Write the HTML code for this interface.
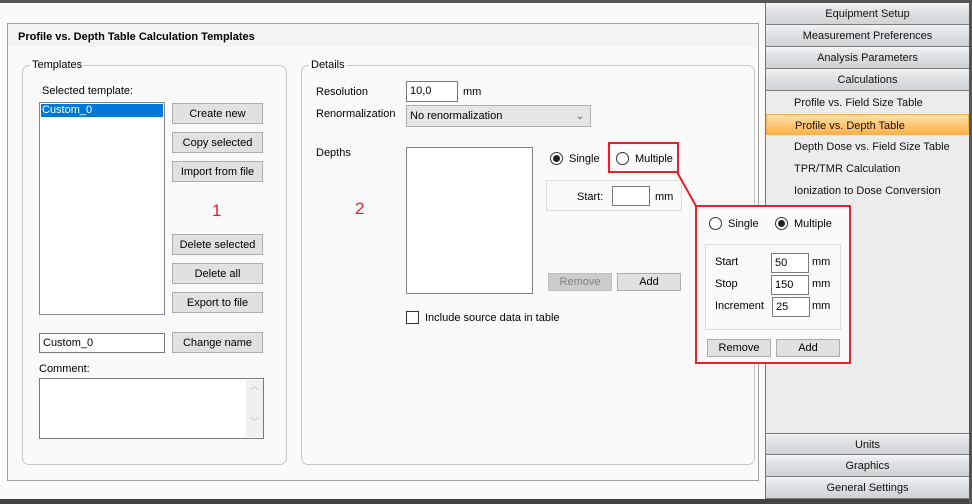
<!DOCTYPE html>
<html><head><meta charset="utf-8"><style>
*{margin:0;padding:0;box-sizing:border-box}
body{width:972px;height:504px;overflow:hidden;background:#fafafa;font-family:"Liberation Sans",sans-serif;font-size:11px;color:#000;position:relative}
.a{position:absolute}
.btn{position:absolute;background:#e1e1e1;border:1px solid #adadad;text-align:center;line-height:20px;font-size:11px}
.inp{position:absolute;background:#fff;border:1px solid #7a7a7a;padding-left:3px;line-height:19px}
.grp{position:absolute;border:1px solid #c8c8c8;border-radius:7px}
.leg{position:absolute;background:#fafafa;padding:0 2px;line-height:14px}
.rad{position:absolute;width:13px;height:13px;border:1px solid #333;border-radius:50%;background:#fff}
.rad.on::after{content:"";position:absolute;left:2px;top:2px;width:7px;height:7px;border-radius:50%;background:#222}
.hdr{position:absolute;left:766px;width:203px;height:22px;border-bottom:1px solid #7c7c7c;background:linear-gradient(#f2f3f4 0%,#e3e5e7 30%,#cfd3d6 100%);text-align:center;line-height:22px;color:#111}
.it{position:absolute;left:794px;line-height:14px;color:#111}
.red{position:absolute;border:2px solid #e8202a}
</style></head><body>
<div class="a" style="left:0;top:0;width:972px;height:3px;background:#555"></div>
<div class="a" style="left:0;top:499px;width:972px;height:5px;background:#444"></div>
<div class="a" style="left:969px;top:0;width:3px;height:504px;background:#555"></div>

<div class="a" style="left:765px;top:3px;width:204px;height:496px;background:#ececec;border-left:1px solid #777"></div>
<div class="hdr" style="top:3px">Equipment Setup</div>
<div class="hdr" style="top:25px">Measurement Preferences</div>
<div class="hdr" style="top:47px">Analysis Parameters</div>
<div class="hdr" style="top:69px">Calculations</div>
<div class="it" style="top:96px">Profile vs. Field Size Table</div>
<div class="a" style="left:766px;top:114px;width:203px;height:21px;background:linear-gradient(#ffe0a8,#fdb14a);border:1px solid #f5b050"></div>
<div class="it" style="top:119px;left:795px">Profile vs. Depth Table</div>
<div class="it" style="top:140px">Depth Dose vs. Field Size Table</div>
<div class="it" style="top:162px">TPR/TMR Calculation</div>
<div class="it" style="top:184px">Ionization to Dose Conversion</div>
<div class="hdr" style="top:433px;border-top:1px solid #7c7c7c">Units</div>
<div class="hdr" style="top:455px">Graphics</div>
<div class="hdr" style="top:477px">General Settings</div>

<div class="a" style="left:7px;top:23px;width:752px;height:458px;border:1px solid #a0a0a0;background:#fafafa"></div>
<div class="a" style="left:8px;top:24px;width:750px;height:23px;background:#f3f3f3"></div>
<div class="a" style="left:18px;top:30px;font-weight:bold;font-size:11px;line-height:14px">Profile vs. Depth Table Calculation Templates</div>

<div class="grp" style="left:22px;top:65px;width:265px;height:400px"></div>
<div class="leg" style="left:30px;top:58px">Templates</div>
<div class="a" style="left:42px;top:85px">Selected template:</div>
<div class="a" style="left:39px;top:102px;width:126px;height:213px;background:#fff;border:1px solid #828790"></div>
<div class="a" style="left:41px;top:104px;width:122px;height:13px;background:#0078d7;color:#fff;line-height:13px;padding-left:1px">Custom_0</div>
<div class="btn" style="left:172px;top:103px;width:91px;height:21px">Create new</div>
<div class="btn" style="left:172px;top:132px;width:91px;height:21px">Copy selected</div>
<div class="btn" style="left:172px;top:161px;width:91px;height:21px">Import from file</div>
<div class="a" style="left:212px;top:201px;color:#e8202a;font-size:17px">1</div>
<div class="btn" style="left:172px;top:234px;width:91px;height:21px">Delete selected</div>
<div class="btn" style="left:172px;top:263px;width:91px;height:21px">Delete all</div>
<div class="btn" style="left:172px;top:292px;width:91px;height:21px">Export to file</div>
<div class="inp" style="left:39px;top:333px;width:126px;height:20px;line-height:18px">Custom_0</div>
<div class="btn" style="left:172px;top:332px;width:91px;height:21px">Change name</div>
<div class="a" style="left:39px;top:363px">Comment:</div>
<div class="a" style="left:39px;top:378px;width:225px;height:61px;background:#fff;border:1px solid #7a7a7a"></div>
<div class="a" style="left:246px;top:380px;width:17px;height:57px;background:#f0f0f0;color:#bbb;font-size:9px;text-align:center;line-height:12px">︿<br><br><br>﹀</div>

<div class="grp" style="left:301px;top:65px;width:454px;height:400px"></div>
<div class="leg" style="left:309px;top:58px">Details</div>
<div class="a" style="left:316px;top:86px">Resolution</div>
<div class="inp" style="left:406px;top:81px;width:52px;height:21px;line-height:19px">10,0</div>
<div class="a" style="left:463px;top:86px">mm</div>
<div class="a" style="left:316px;top:108px">Renormalization</div>
<div class="a" style="left:406px;top:105px;width:185px;height:22px;background:#e5e5e5;border:1px solid #adadad;padding-left:3px;line-height:21px">No renormalization<span style="position:absolute;right:6px;top:0;color:#555;font-size:10px">&#8964;</span></div>
<div class="a" style="left:316px;top:147px">Depths</div>
<div class="a" style="left:355px;top:199px;color:#e8202a;font-size:17px">2</div>
<div class="a" style="left:406px;top:147px;width:127px;height:147px;background:#fff;border:1px solid #828282"></div>
<div class="rad on" style="left:550px;top:152px"></div>
<div class="a" style="left:569px;top:153px">Single</div>
<div class="rad" style="left:616px;top:152px"></div>
<div class="a" style="left:635px;top:153px">Multiple</div>
<div class="a" style="left:546px;top:180px;width:136px;height:31px;border:1px solid #dcdcdc;background:#fafafa"></div>
<div class="a" style="left:577px;top:191px">Start:</div>
<div class="inp" style="left:612px;top:186px;width:38px;height:20px"></div>
<div class="a" style="left:655px;top:191px">mm</div>
<div class="btn" style="left:548px;top:273px;width:64px;height:18px;line-height:17px;background:#cccccc;border-color:#bfbfbf;color:#838383">Remove</div>
<div class="btn" style="left:617px;top:273px;width:64px;height:18px;line-height:17px">Add</div>
<div class="a" style="left:406px;top:311px;width:13px;height:13px;border:1px solid #333;background:#fff"></div>
<div class="a" style="left:425px;top:312px">Include source data in table</div>

<div class="red" style="left:608px;top:142px;width:71px;height:31px"></div>
<svg class="a" style="left:0;top:0" width="972" height="504"><line x1="677" y1="172" x2="696" y2="206" stroke="#e8202a" stroke-width="2"/></svg>
<div class="red" style="left:695px;top:205px;width:156px;height:159px;background:#fafafa"></div>
<div class="rad" style="left:709px;top:217px"></div>
<div class="a" style="left:728px;top:218px">Single</div>
<div class="rad on" style="left:775px;top:217px"></div>
<div class="a" style="left:794px;top:218px">Multiple</div>
<div class="a" style="left:705px;top:244px;width:136px;height:86px;border:1px solid #dcdcdc"></div>
<div class="a" style="left:715px;top:256px">Start</div>
<div class="inp" style="left:771px;top:253px;width:38px;height:20px;line-height:19px">50</div>
<div class="a" style="left:812px;top:256px">mm</div>
<div class="a" style="left:715px;top:278px">Stop</div>
<div class="inp" style="left:771px;top:275px;width:38px;height:20px;line-height:19px">150</div>
<div class="a" style="left:812px;top:278px">mm</div>
<div class="a" style="left:715px;top:300px">Increment</div>
<div class="inp" style="left:772px;top:297px;width:38px;height:20px;line-height:19px">25</div>
<div class="a" style="left:812px;top:300px">mm</div>
<div class="btn" style="left:707px;top:339px;width:64px;height:18px;line-height:17px">Remove</div>
<div class="btn" style="left:776px;top:339px;width:64px;height:18px;line-height:17px">Add</div>
</body></html>
